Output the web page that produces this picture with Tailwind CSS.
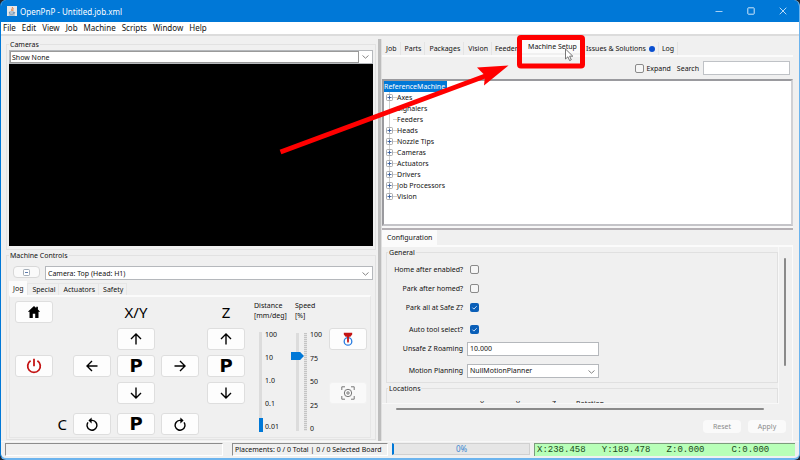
<!DOCTYPE html>
<html lang="en">
<head>
<meta charset="utf-8">
<title>OpenPnP - Untitled.job.xml</title>
<script src="https://cdn.jsdelivr.net/npm/@tailwindcss/browser@4"></script>
</head>
<body class="bg-[#20262e] font-['Noto_Sans',sans-serif] text-[7px] leading-[11px] text-[#111]">
<div class="relative flex min-h-screen flex-col overflow-hidden rounded-md border-x border-b-2 border-l-[#0078d7] border-r-[#6cb4ee] border-b-[#6cb4ee] bg-[#f0f0f0]">

  <header class="flex h-[22px] shrink-0 items-center bg-[#0078d7] pl-[6px] text-white">
    <svg class="mr-[3px] size-[10px]" viewBox="0 0 10 10"><rect width="10" height="10" fill="#e8e8e8"/><path d="M5.2 1C6.6 2.4 3.6 3 5 5M6.6 2.6C5.4 3.4 5.8 4 6 5" stroke="#e07a3c" fill="none"/><path d="M2.4 6h4.4v1.4c0 .8-4.4.8-4.4 0zM6.8 6.3c1.4-.2 1.2 1.2 0 1.2M1.8 9h6" stroke="#4a7ba8" stroke-width=".7" fill="none"/></svg>
    <h1 class="text-[8px]">OpenPnP - Untitled.job.xml</h1>
    <div class="ml-auto flex gap-[18px] pr-[9px]">
      <button aria-label="Minimize" class="grid size-[14px] place-items-center"><svg class="size-2" viewBox="0 0 8 8"><path d="M.5 4.5h7" stroke="#cfe6fa" stroke-width=".8"/></svg></button>
      <button aria-label="Maximize" class="grid size-[14px] place-items-center"><svg class="size-2" viewBox="0 0 8 8"><rect x=".8" y=".8" width="6.4" height="6.4" rx=".6" fill="none" stroke="#cfe6fa"/></svg></button>
      <button aria-label="Close" class="grid size-[14px] place-items-center"><svg class="size-2" viewBox="0 0 8 8"><path d="M.7.7l6.6 6.6M7.3.7L.7 7.3" stroke="#cfe6fa" stroke-width=".9"/></svg></button>
    </div>
  </header>

  <nav class="flex h-[14px] shrink-0 items-center gap-[6px] border-b-2 border-[#dcdcdc] bg-white pl-[2px] text-[8px] leading-[12px]">
    <button>File</button><button>Edit</button><button>View</button><button>Job</button><button>Machine</button><button>Scripts</button><button>Window</button><button>Help</button>
  </nav>

  <main class="flex flex-1">
    <section class="flex w-[47.25%] shrink-0 flex-col pt-[3px] pr-[2px] pl-[5px]">
      <fieldset class="flex flex-1 flex-col border border-[#e2e2e2] px-[2px] pb-[3px]">
        <legend class="px-px">Cameras</legend>
        <div class="relative">
          <select aria-label="Camera view" class="block h-[14px] w-full appearance-none border border-[#b5b8bc] bg-white pl-[2px] leading-[11px]"><option>Show None</option></select>
          <span class="pointer-events-none absolute inset-y-[1px] right-[14px] left-px border border-[#9a9a9a]"></span>
          <svg class="pointer-events-none absolute top-[5px] right-[4px] h-[4px] w-[7px]" viewBox="0 0 7 4"><path d="M.5.5l3 2.7 3-2.7" fill="none" stroke="#777" stroke-width=".9"/></svg>
        </div>
        <div class="flex-1 bg-black"></div>
      </fieldset>

      <fieldset class="mb-px border border-[#e2e2e2] px-[2px] pb-px">
        <legend class="px-px">Machine Controls</legend>
        <div class="mt-[5px] flex gap-[5px] pl-[4px]">
          <button aria-label="Collapse controls" class="grid h-[12px] w-[27px] place-items-center rounded-sm border border-[#d8d8d8] bg-[#fafafa]"><svg class="size-[7px]" viewBox="0 0 7 7"><rect x=".5" y=".5" width="6" height="6" rx="1" fill="#fff" stroke="#8c98a4" stroke-width=".8"/><path d="M2 3.5h3" stroke="#345a9a" stroke-width=".8"/></svg></button>
          <div class="relative flex-1">
            <select aria-label="Tool" class="block h-[14px] w-full appearance-none border border-[#b5b8bc] bg-white pl-[2px] leading-[11px]"><option>Camera: Top (Head: H1)</option></select>
            <svg class="pointer-events-none absolute top-[6px] right-[4px] h-[4px] w-[7px]" viewBox="0 0 7 4"><path d="M.5.5l3 2.7 3-2.7" fill="none" stroke="#777" stroke-width=".9"/></svg>
          </div>
        </div>
        <div role="tablist" class="mt-px flex h-[14px] items-end">
          <button role="tab" aria-selected="true" class="h-[14px] bg-[#fbfbfb] px-[4px]">Jog</button>
          <button role="tab" class="h-[12px] border border-b-0 border-[#e6e6e6] pr-[3px] pl-[4px]">Special</button>
          <button role="tab" class="h-[12px] border border-b-0 border-l-0 border-[#e6e6e6] pr-[3px] pl-[4px]">Actuators</button>
          <button role="tab" class="h-[12px] border border-b-0 border-l-0 border-[#e6e6e6] pr-[3px] pl-[4px]">Safety</button>
        </div>
        <div class="mr-[2px] flex border border-t-2 border-[#e6e6e6] border-t-[#fbfbfb] pt-[4px] pb-[2px] pl-[5px]">
          <div class="grid grid-cols-[38px_8px_38px_38px_38px_40px] grid-rows-[22px_22px_22px_22px_26px] items-end justify-items-end gap-x-[6px] gap-y-[5px] [&>button]:grid [&>button]:h-[22px] [&>button]:w-[38px] [&>button]:place-items-center [&>button]:rounded-[3px] [&>button]:border [&>button]:border-[#dedede] [&>button]:bg-[#fdfdfd]">
            <button aria-label="Home" class="col-start-1 row-start-1"><svg class="size-[14px]" viewBox="0 0 14 14"><path d="M7 1L.8 6.8h1.7V13h3.3V8.8h2.4V13h3.3V6.8h1.7L10.9 4.6V1.8H9.2V3z"/></svg></button>
            <span class="col-start-4 row-start-1 w-full self-center text-center text-[15px] leading-[22px] text-black">X/Y</span>
            <span class="col-start-6 row-start-1 w-[38px] self-center text-center text-[15px] leading-[22px] text-black">Z</span>
            <button aria-label="Y plus" class="col-start-4 row-start-2"><svg class="size-[14px]" viewBox="0 0 14 14"><path d="M7 12.5V2M2 7l5-5 5 5" fill="none" stroke="#000" stroke-width="1.4"/></svg></button>
            <button aria-label="Z up" class="col-start-6 row-start-2"><svg class="size-[14px]" viewBox="0 0 14 14"><path d="M7 12.5V2M2 7l5-5 5 5" fill="none" stroke="#000" stroke-width="1.4"/></svg></button>
            <button aria-label="Power" class="col-start-1 row-start-3"><svg class="size-[16px]" viewBox="0 0 16 16"><path d="M4.6 2.8a6.3 6.3 0 1 0 6.8 0M8 .8v7.4" fill="none" stroke="#c41414" stroke-width="1.8"/></svg></button>
            <button aria-label="X minus" class="col-start-3 row-start-3"><svg class="size-[14px]" viewBox="0 0 14 14"><path d="M12.5 7H2M7 2L2 7l5 5" fill="none" stroke="#000" stroke-width="1.4"/></svg></button>
            <button class="col-start-4 row-start-3 font-['DejaVu_Sans',sans-serif] text-[18px] leading-[20px] font-bold text-black">P</button>
            <button aria-label="X plus" class="col-start-5 row-start-3"><svg class="size-[14px]" viewBox="0 0 14 14"><path d="M1.5 7H12M7 2l5 5-5 5" fill="none" stroke="#000" stroke-width="1.4"/></svg></button>
            <button class="col-start-6 row-start-3 font-['DejaVu_Sans',sans-serif] text-[18px] leading-[20px] font-bold text-black">P</button>
            <button aria-label="Y minus" class="col-start-4 row-start-4"><svg class="size-[14px]" viewBox="0 0 14 14"><path d="M7 1.5V12M2 7l5 5 5-5" fill="none" stroke="#000" stroke-width="1.4"/></svg></button>
            <button aria-label="Z down" class="col-start-6 row-start-4"><svg class="size-[14px]" viewBox="0 0 14 14"><path d="M7 1.5V12M2 7l5 5 5-5" fill="none" stroke="#000" stroke-width="1.4"/></svg></button>
            <span class="col-start-2 row-start-5 text-[15px] leading-[22px] text-black">C</span>
            <button aria-label="Rotate counterclockwise" class="col-start-3 row-start-5"><svg class="size-[14px]" viewBox="0 0 14 14"><path d="M3 5.4A4.9 4.9 0 1 0 7.4 3.4H4.6" fill="none" stroke="#000" stroke-width="1.4"/><path d="M6.6.4L3.4 3.4l3.2 3z"/></svg></button>
            <button class="col-start-4 row-start-5 font-['DejaVu_Sans',sans-serif] text-[18px] leading-[20px] font-bold text-black">P</button>
            <button aria-label="Rotate clockwise" class="col-start-5 row-start-5"><svg class="size-[14px]" viewBox="0 0 14 14"><path d="M11 5.4A4.9 4.9 0 1 1 6.6 3.4H9.4" fill="none" stroke="#000" stroke-width="1.4"/><path d="M7.4.4l3.2 3-3.2 3z"/></svg></button>
          </div>

          <div class="ml-[9px] w-[36px]">
            <label for="distance" class="block leading-[10px]">Distance<br>[mm/deg]</label>
            <div class="mt-[8px] flex h-[104px] items-start gap-[2px] pl-[5px]">
              <input id="distance" type="range" min="0" max="4" value="0" class="mt-[3px] h-[100px] w-[4px] appearance-none bg-[linear-gradient(90deg,#dcdcdc_3px,transparent_3px)] [direction:rtl] [writing-mode:vertical-lr] [&::-webkit-slider-thumb]:h-[14px] [&::-webkit-slider-thumb]:w-[4px] [&::-webkit-slider-thumb]:appearance-none [&::-webkit-slider-thumb]:bg-[#0078d7]">
              <div class="flex h-[104px] flex-col justify-between leading-[12px]"><span>100</span><span>10</span><span>1.0</span><span>0.1</span><span>0.01</span></div>
            </div>
          </div>
          <div class="ml-[5px] w-[34px]">
            <label for="speed" class="block leading-[10px]">Speed<br>[%]</label>
            <div class="mt-[8px] -ml-[4px] flex h-[106px] items-start">
              <input id="speed" type="range" min="0" max="100" value="79" class="mt-[4px] h-[98px] w-[13px] appearance-none bg-[linear-gradient(90deg,transparent_5px,#dcdcdc_5px,#dcdcdc_8px,transparent_8px)] [direction:rtl] [writing-mode:vertical-lr] [&::-webkit-slider-thumb]:h-[8px] [&::-webkit-slider-thumb]:w-[13px] [&::-webkit-slider-thumb]:appearance-none [&::-webkit-slider-thumb]:bg-[#0078d7] [&::-webkit-slider-thumb]:[clip-path:polygon(0_0,70%_0,100%_50%,70%_100%,0_100%)]">
              <span class="mt-[4px] h-[98px] w-[3px] bg-[repeating-linear-gradient(180deg,#c4c4c4_0_1px,#e4e4e4_1px_2px)]"></span>
              <div class="ml-[3px] flex h-[106px] flex-col justify-between leading-[12px]"><span>100</span><span>75</span><span>50</span><span>25</span><span>0</span></div>
            </div>
          </div>
          <div class="flex flex-col gap-[32px] pt-[27px]">
            <button aria-label="Nozzle pick" class="grid h-[22px] w-[38px] place-items-center rounded-[3px] border border-[#dedede] bg-[#fdfdfd]"><svg class="size-[14px]" viewBox="0 0 14 14"><circle cx="7" cy="9.4" r="3.8" fill="none" stroke="#2a7de1" stroke-width="1.3"/><path d="M2.8.8h8.4v1.6L9.4 4.8H7.9v4.6L7 11.2l-.9-1.8V4.8H4.6L2.8 2.4z" fill="#c41414"/></svg></button>
            <button aria-label="Position camera" disabled class="grid h-[22px] w-[38px] place-items-center rounded-[3px] border border-[#f2f2f2] bg-[#f9f9f9]"><svg class="size-[14px]" viewBox="0 0 14 14" fill="none" stroke="#777"><path d="M.8 4V.8H4M10 .8h3.2V4M13.2 10v3.2H10M4 13.2H.8V10"/><circle cx="7" cy="7" r="3.7"/><circle cx="7" cy="7" r="1.2"/></svg></button>
          </div>
        </div>
      </fieldset>
    </section>

    <div class="mt-[3px] w-[4px] shrink-0 border-r border-[#e0e0e0] bg-[#bdbdbd]"></div>

    <section class="flex min-w-0 flex-1 flex-col pt-[4px] pr-[6px]">
      <div role="tablist" class="flex h-[15px] items-end [&>button]:h-[13px] [&>button]:border-r [&>button]:border-[#e4e4e4] [&>button]:whitespace-nowrap">
        <button role="tab" class="pr-[3px] pl-[4px]">Job</button><button role="tab" class="pr-[3px] pl-[4px]">Parts</button><button role="tab" class="pr-[3px] pl-[4px]">Packages</button><button role="tab" class="pr-[3px] pl-[4px]">Vision</button><button role="tab" class="pl-[3px]">Feeders</button>
        <button role="tab" aria-selected="true" class="w-[62px] self-start bg-[#fbfbfb]">Machine Setup</button>
        <button role="tab" class="flex items-center gap-[3px] pr-[3px] pl-[2px]">Issues &amp; Solutions<span class="size-[6px] rounded-full bg-[#0a4fd0]"></span></button>
        <button role="tab" class="pr-[3px] pl-[3px]">Log</button>
      </div>
      <div class="flex h-[24px] items-center justify-end gap-[6px] border-t-2 border-[#fbfbfb] pr-[3px]">
        <label class="flex items-center gap-[2px]"><input type="checkbox" class="size-[9px] appearance-none rounded-[2px] border border-[#8a8a8a] bg-[#f6f6f6]">Expand</label>
        <div class="flex items-center gap-[4px]"><label for="search">Search</label><input id="search" type="text" class="h-[14px] w-[87px] border border-[#bfc2c6] bg-white px-[2px]"></div>
      </div>
      <div class="flex-1 border-2 border-t-[#9a9a9e] border-r-[#d0d0d4] border-b-[#c4c4c8] border-l-[#9a9a9e] bg-white">
        <p class="flex"><span class="bg-[#0078d7] pr-[2px] text-white">ReferenceMachine</span></p>
        <ul class="bg-[linear-gradient(90deg,transparent_5px,#cfcfcf_5px,#cfcfcf_6px,transparent_6px)] bg-[length:100%_105px] bg-no-repeat pl-[2px] [&_i]:ml-[7px] [&_i]:h-px [&_i]:w-[4px] [&_i]:bg-[#cfcfcf] [&_li]:flex [&_li]:h-[11px] [&_li]:items-center [&_svg]:size-[7px] [&_svg+i]:ml-0">
          <li><svg viewBox="0 0 7 7"><rect x=".5" y=".5" width="6" height="6" rx="1" fill="#fff" stroke="#9a9a9a" stroke-width=".8"/><path d="M1.5 3.5h4M3.5 1.5v4" stroke="#345a9a" stroke-width=".9"/></svg><i></i>Axes</li>
          <li><i></i>Signalers</li>
          <li><i></i>Feeders</li>
          <li><svg viewBox="0 0 7 7"><rect x=".5" y=".5" width="6" height="6" rx="1" fill="#fff" stroke="#9a9a9a" stroke-width=".8"/><path d="M1.5 3.5h4M3.5 1.5v4" stroke="#345a9a" stroke-width=".9"/></svg><i></i>Heads</li>
          <li><svg viewBox="0 0 7 7"><rect x=".5" y=".5" width="6" height="6" rx="1" fill="#fff" stroke="#9a9a9a" stroke-width=".8"/><path d="M1.5 3.5h4M3.5 1.5v4" stroke="#345a9a" stroke-width=".9"/></svg><i></i>Nozzle Tips</li>
          <li><svg viewBox="0 0 7 7"><rect x=".5" y=".5" width="6" height="6" rx="1" fill="#fff" stroke="#9a9a9a" stroke-width=".8"/><path d="M1.5 3.5h4M3.5 1.5v4" stroke="#345a9a" stroke-width=".9"/></svg><i></i>Cameras</li>
          <li><svg viewBox="0 0 7 7"><rect x=".5" y=".5" width="6" height="6" rx="1" fill="#fff" stroke="#9a9a9a" stroke-width=".8"/><path d="M1.5 3.5h4M3.5 1.5v4" stroke="#345a9a" stroke-width=".9"/></svg><i></i>Actuators</li>
          <li><svg viewBox="0 0 7 7"><rect x=".5" y=".5" width="6" height="6" rx="1" fill="#fff" stroke="#9a9a9a" stroke-width=".8"/><path d="M1.5 3.5h4M3.5 1.5v4" stroke="#345a9a" stroke-width=".9"/></svg><i></i>Drivers</li>
          <li><svg viewBox="0 0 7 7"><rect x=".5" y=".5" width="6" height="6" rx="1" fill="#fff" stroke="#9a9a9a" stroke-width=".8"/><path d="M1.5 3.5h4M3.5 1.5v4" stroke="#345a9a" stroke-width=".9"/></svg><i></i>Job Processors</li>
          <li><svg viewBox="0 0 7 7"><rect x=".5" y=".5" width="6" height="6" rx="1" fill="#fff" stroke="#9a9a9a" stroke-width=".8"/><path d="M1.5 3.5h4M3.5 1.5v4" stroke="#345a9a" stroke-width=".9"/></svg><i></i>Vision</li>
        </ul>
      </div>
      <div class="h-[4px] border-y-2 border-t-[#f8f8f8] border-b-[#b4b0b4]"></div>
      <div role="tablist" class="flex h-[15px]"><button role="tab" aria-selected="true" class="bg-[#fbfbfb] px-[5px]">Configuration</button></div>
      <div class="border-t-2 border-r border-[#fbfbfb] pb-[8px]">
        <div class="flex">
          <div class="h-[157px] min-w-0 flex-1 overflow-hidden border-r border-b border-[#f8f8f8] pl-[4px]">
            <fieldset class="border border-[#e0e0e0] pt-[2px] pb-[2px] [&>div]:flex [&>div]:h-[19px] [&>div]:items-center [&>div]:gap-[4px] [&>div>label]:w-[76px] [&>div>label]:text-right">
              <legend class="ml-px px-px">General</legend>
              <div><label for="c1">Home after enabled?</label><input id="c1" type="checkbox" class="ml-[3px] size-[9px] appearance-none rounded-[2px] border border-[#8a8a8a] bg-[#f6f6f6]"></div>
              <div><label for="c2">Park after homed?</label><input id="c2" type="checkbox" class="ml-[3px] size-[9px] appearance-none rounded-[2px] border border-[#8a8a8a] bg-[#f6f6f6]"></div>
              <div><label for="c3">Park all at Safe Z?</label><span class="relative ml-[3px] size-[9px]"><input id="c3" type="checkbox" checked class="block size-[9px] appearance-none rounded-[2px] bg-[#0a5fb8]"><svg class="pointer-events-none absolute inset-0 size-[9px]" viewBox="0 0 9 9"><path d="M2.4 4.6l1.5 1.5 2.8-2.9" fill="none" stroke="#d8eaff" stroke-width=".9"/></svg></span></div>
              <div class="mt-[3px]"><label for="c4">Auto tool select?</label><span class="relative ml-[3px] size-[9px]"><input id="c4" type="checkbox" checked class="block size-[9px] appearance-none rounded-[2px] bg-[#0a5fb8]"><svg class="pointer-events-none absolute inset-0 size-[9px]" viewBox="0 0 9 9"><path d="M2.4 4.6l1.5 1.5 2.8-2.9" fill="none" stroke="#d8eaff" stroke-width=".9"/></svg></span></div>
              <div><label for="roam">Unsafe Z Roaming</label><input id="roam" type="text" value="10.000" class="h-[14px] w-[132px] border border-[#b5b8bc] bg-white px-[2px]"></div>
              <div class="mt-[3px]"><label for="plan">Motion Planning</label><span class="relative"><select id="plan" class="block h-[14px] w-[132px] appearance-none border border-[#b5b8bc] bg-white pl-[2px] leading-[11px]"><option>NullMotionPlanner</option></select><svg class="pointer-events-none absolute top-[6px] right-[4px] h-[4px] w-[7px]" viewBox="0 0 7 4"><path d="M.5.5l3 2.7 3-2.7" fill="none" stroke="#777" stroke-width=".9"/></svg></span></div>
            </fieldset>
            <fieldset class="border border-[#e0e0e0] pt-[4px]">
              <legend class="ml-px px-px">Locations</legend>
              <div class="grid grid-cols-[repeat(4,36px)] pl-[77px] text-center"><span>X</span><span>Y</span><span>Z</span><span>Rotation</span></div>
            </fieldset>
          </div>
          <div class="w-[13px] pt-[11px] pl-[5px]"><div class="h-[108px] w-[2px] rounded bg-[#8a8a8a]"></div></div>
        </div>
        <div class="mt-[4px] mr-[28px] ml-[14px] h-[2px] rounded bg-[#8a8a8a]"></div>
        <div class="mt-[10px] flex justify-end gap-[7px] pr-[6px] text-[#8c8c8c] [&>button]:h-[13px] [&>button]:w-[38px] [&>button]:rounded-sm [&>button]:bg-[#fafafa]">
          <button disabled>Reset</button><button disabled>Apply</button>
        </div>
      </div>
    </section>
  </main>

  <footer class="flex h-[17px] shrink-0 items-start border-t border-[#f8f8f8] pt-px pr-[4px] pl-[4px]">
    <div class="h-[13px] w-[218px] border border-t-[#8c8c8c] border-r-[#fff] border-b-[#fff] border-l-[#8c8c8c]"></div>
    <div class="ml-[9px] h-[13px] w-[156px] border border-t-[#8c8c8c] border-r-[#fff] border-b-[#fff] border-l-[#8c8c8c] pl-[2px] whitespace-nowrap">Placements: 0 / 0 Total | 0 / 0 Selected Board</div>
    <div role="progressbar" aria-valuenow="0" class="ml-[4px] h-[12px] w-[138px] border border-l-2 border-[#d0d0d0] border-l-[#0078d7] bg-[#e6e6e6] text-center text-[8px] leading-[10px] text-[#3a86d0]">0%</div>
    <output class="ml-[4px] h-[13px] flex-1 overflow-hidden border-t border-l border-[#7c9c7c] bg-[#b8ffb8] pl-[2px] font-['Liberation_Mono',monospace] text-[9px] leading-[12px] whitespace-pre text-[#1c4a1c]">X:238.458   Y:189.478   Z:0.000     C:0.000</output>
  </footer>

  <svg class="pointer-events-none absolute top-0 left-0 h-[180px] w-[600px]" viewBox="1 0 600 180">
    <path d="M280.500 152L488 75" stroke="#f00" stroke-width="5"/>
    <path d="M508.500 65.500L477 67.500 485 75.500 484 85.500z" fill="#f00"/>
    <rect x="519.500" y="37.500" width="63" height="28.500" rx="1.500" fill="none" stroke="#f00" stroke-width="5"/>
    <path d="M565.500 49v10l2.400-2.200 1.700 3.800 1.700-.8-1.700-3.600h3.200z" fill="#fff" stroke="#555" stroke-width=".8"/>
  </svg>
</div>
</body>
</html>
